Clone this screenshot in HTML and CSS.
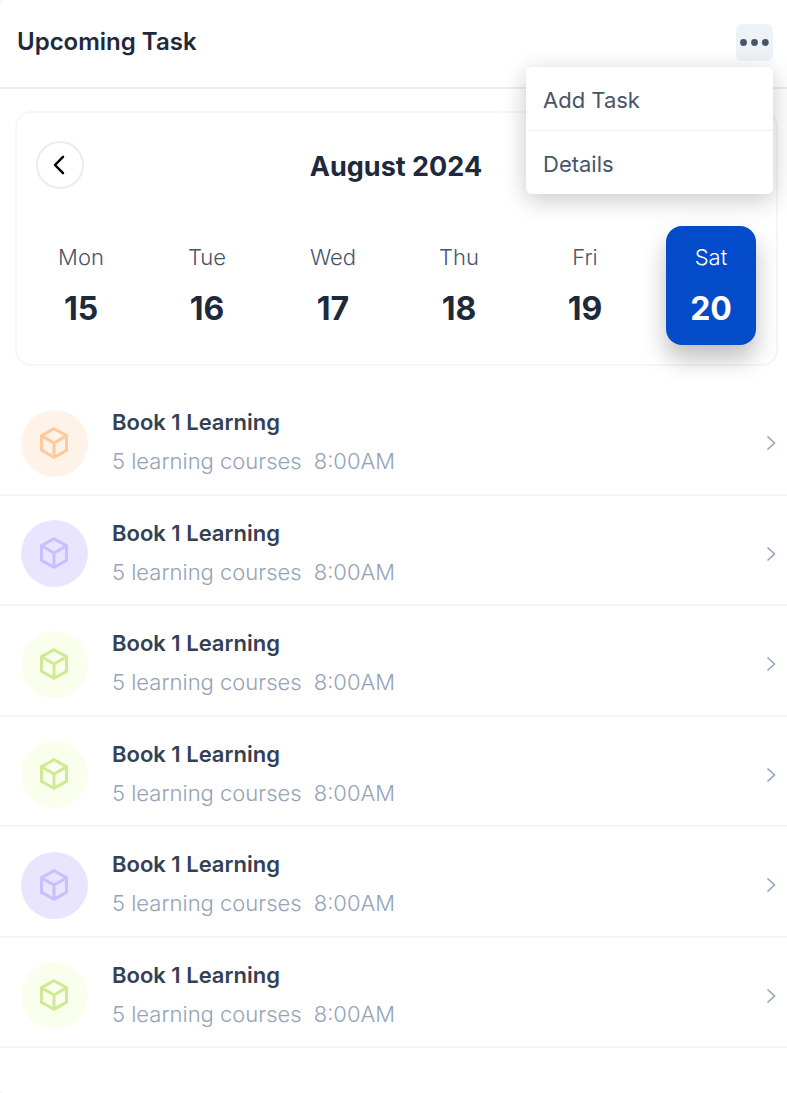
FILE: index.html
```html
<!DOCTYPE html>
<html lang="en">
<head>
<meta charset="utf-8">
<meta name="viewport" content="width=device-width, initial-scale=1">
<title>Upcoming Task</title>
<link rel="stylesheet" href="styles.css">
</head>
<body>
<svg class="sprite" aria-hidden="true">
  <symbol id="cube" viewBox="0 0 32 34">
    <path d="M16 2.700 28.500 9.700V24.300L16 31.300 3.500 24.300V9.700Z M3.500 9.700 16 17 28.500 9.700 M16 17V31.300" fill="none" stroke="currentColor" stroke-width="3"/>
  </symbol>
  <symbol id="chevron" viewBox="0 0 10 16">
    <path d="M1.500 1.500 8.500 8 1.500 14.500" fill="none" stroke="currentColor" stroke-width="1.600"/>
  </symbol>
</svg>
<main class="panel">
  <header class="header">
    <h1 class="title">Upcoming Task</h1>
    <div class="menu-wrap">
      <button class="more" type="button" aria-label="More options" aria-expanded="true">
        <svg width="31" height="9" viewBox="0 0 31 9" fill="currentColor"><circle cx="4.500" cy="4.500" r="3.400"/><circle cx="15.500" cy="4.500" r="3.400"/><circle cx="26.300" cy="4.500" r="3.400"/></svg>
      </button>
      <div class="menu">
        <button class="menu-item" type="button">Add Task</button>
        <button class="menu-item" type="button">Details</button>
      </div>
    </div>
  </header>
  <section class="calendar">
    <div class="month-bar">
      <button class="prev" type="button" aria-label="Previous week">
        <svg width="12" height="20" viewBox="0 0 12 20" fill="none" stroke="currentColor" stroke-width="2.500" stroke-linecap="round" stroke-linejoin="round"><path d="M10 1.800 2 10l8 8.200"/></svg>
      </button>
      <h2 class="month">August 2024</h2>
    </div>
    <div class="week">
      <button class="day" type="button"><span class="name">Mon</span><span class="date">15</span></button>
      <button class="day" type="button"><span class="name">Tue</span><span class="date">16</span></button>
      <button class="day" type="button"><span class="name">Wed</span><span class="date">17</span></button>
      <button class="day" type="button"><span class="name">Thu</span><span class="date">18</span></button>
      <button class="day" type="button"><span class="name">Fri</span><span class="date">19</span></button>
      <button class="day selected" type="button"><span class="name">Sat</span><span class="date">20</span></button>
    </div>
  </section>
  <ul class="tasks">
    <li class="task"><a class="link" href="#"><span class="badge orange"><svg class="cube"><use href="#cube"/></svg></span><span class="text"><span class="task-name">Book 1 Learning</span><span class="meta"><span>5 learning courses</span><span>8:00AM</span></span></span><svg class="go"><use href="#chevron"/></svg></a></li>
    <li class="task"><a class="link" href="#"><span class="badge purple"><svg class="cube"><use href="#cube"/></svg></span><span class="text"><span class="task-name">Book 1 Learning</span><span class="meta"><span>5 learning courses</span><span>8:00AM</span></span></span><svg class="go"><use href="#chevron"/></svg></a></li>
    <li class="task"><a class="link" href="#"><span class="badge green"><svg class="cube"><use href="#cube"/></svg></span><span class="text"><span class="task-name">Book 1 Learning</span><span class="meta"><span>5 learning courses</span><span>8:00AM</span></span></span><svg class="go"><use href="#chevron"/></svg></a></li>
    <li class="task"><a class="link" href="#"><span class="badge green"><svg class="cube"><use href="#cube"/></svg></span><span class="text"><span class="task-name">Book 1 Learning</span><span class="meta"><span>5 learning courses</span><span>8:00AM</span></span></span><svg class="go"><use href="#chevron"/></svg></a></li>
    <li class="task"><a class="link" href="#"><span class="badge purple"><svg class="cube"><use href="#cube"/></svg></span><span class="text"><span class="task-name">Book 1 Learning</span><span class="meta"><span>5 learning courses</span><span>8:00AM</span></span></span><svg class="go"><use href="#chevron"/></svg></a></li>
    <li class="task"><a class="link" href="#"><span class="badge green"><svg class="cube"><use href="#cube"/></svg></span><span class="text"><span class="task-name">Book 1 Learning</span><span class="meta"><span>5 learning courses</span><span>8:00AM</span></span></span><svg class="go"><use href="#chevron"/></svg></a></li>
  </ul>
</main>
</body>
</html>
```
FILE: styles.css
```css
* { box-sizing: border-box; }
body { margin: 0; background: #f2f2f2; font-family: Inter, "Liberation Sans", sans-serif; color: #1e293b; }
button { font: inherit; color: inherit; border: 0; padding: 0; background: none; cursor: pointer; }
h1, h2, ul { margin: 0; padding: 0; }
svg { display: block; }
.sprite { position: absolute; width: 0; height: 0; }

.panel { display: flex; flex-direction: column; min-height: 100vh; padding-bottom: 45px; background: #fff; border-radius: 4px 0 0 4px; }

.header { display: flex; align-items: flex-start; justify-content: space-between; padding: 24px 14px 26px 17px; border-bottom: 2px solid #e8edf3; }
.title { font-size: 24px; line-height: 36px; font-weight: 600; }
.menu-wrap { position: relative; }
.more { display: grid; place-items: center; width: 37px; height: 37px; border-radius: 6px; background: #edf2f7; color: #475569; }
.menu { position: absolute; z-index: 2; top: 43px; right: 0; width: 247px; border-radius: 6px; background: #fff; box-shadow: 0 6px 24px rgba(0, 0, 0, 0.22); }
.menu-item { display: block; width: 100%; padding: 17px 17px 14px; font-size: 22px; line-height: 32px; text-align: left; color: #475569; }
.menu-item + .menu-item { border-top: 1px solid #f1f1f3; }

.calendar { margin: 22px 9px 19px 15px; padding: 28px 20px 19px 19px; border: 2px solid #f4f7fa; border-radius: 16px; }
.month-bar { display: grid; grid-template-columns: 48px 1fr 48px; align-items: end; margin-bottom: 37px; }
.prev { display: grid; place-items: center; width: 48px; height: 48px; border: 2px solid #e8edf3; border-radius: 50%; color: #000; padding-right: 3px; }
.month { padding-bottom: 2px; font-size: 27px; line-height: 40px; font-weight: 700; text-align: center; }
.week { display: flex; justify-content: space-between; }
.day { display: flex; flex-direction: column; align-items: center; gap: 16px; width: 90px; padding: 15px 0 16px; border-radius: 16px; }
.name { font-size: 22px; line-height: 32px; font-weight: 300; color: #475569; }
.date { font-size: 32px; line-height: 40px; font-weight: 700; }
.selected { background: #034bc9; color: #fff; box-shadow: 0 14px 24px rgba(0, 0, 0, 0.25); }
.selected .name { color: #fff; }

.tasks { flex: 1; display: flex; flex-direction: column; list-style: none; }
.task { flex: 1; display: flex; border-bottom: 2px solid #f5f5f6; }
.link { flex: 1; display: flex; align-items: center; gap: 24px; padding: 8px 11px 0 21px; color: inherit; text-decoration: none; }
.badge { display: grid; place-items: center; width: 67px; height: 67px; padding: 0 1px 1px 0; border-radius: 50%; }
.cube { width: 32px; height: 34px; }
.orange { background: #fff2e9; color: #ffc99a; }
.purple { background: #e9e5ff; color: #c9bfff; }
.green { background: #faffed; color: #cfea94; }
.text { flex: 1; display: flex; flex-direction: column; gap: 7px; padding-bottom: 3px; }
.task-name { font-size: 22px; line-height: 32px; font-weight: 600; color: #334155; }
.meta { display: flex; gap: 12px; font-size: 22px; line-height: 32px; font-weight: 300; color: #94a3b8; }
.go { width: 10px; height: 16px; color: #94a3b8; }
```
